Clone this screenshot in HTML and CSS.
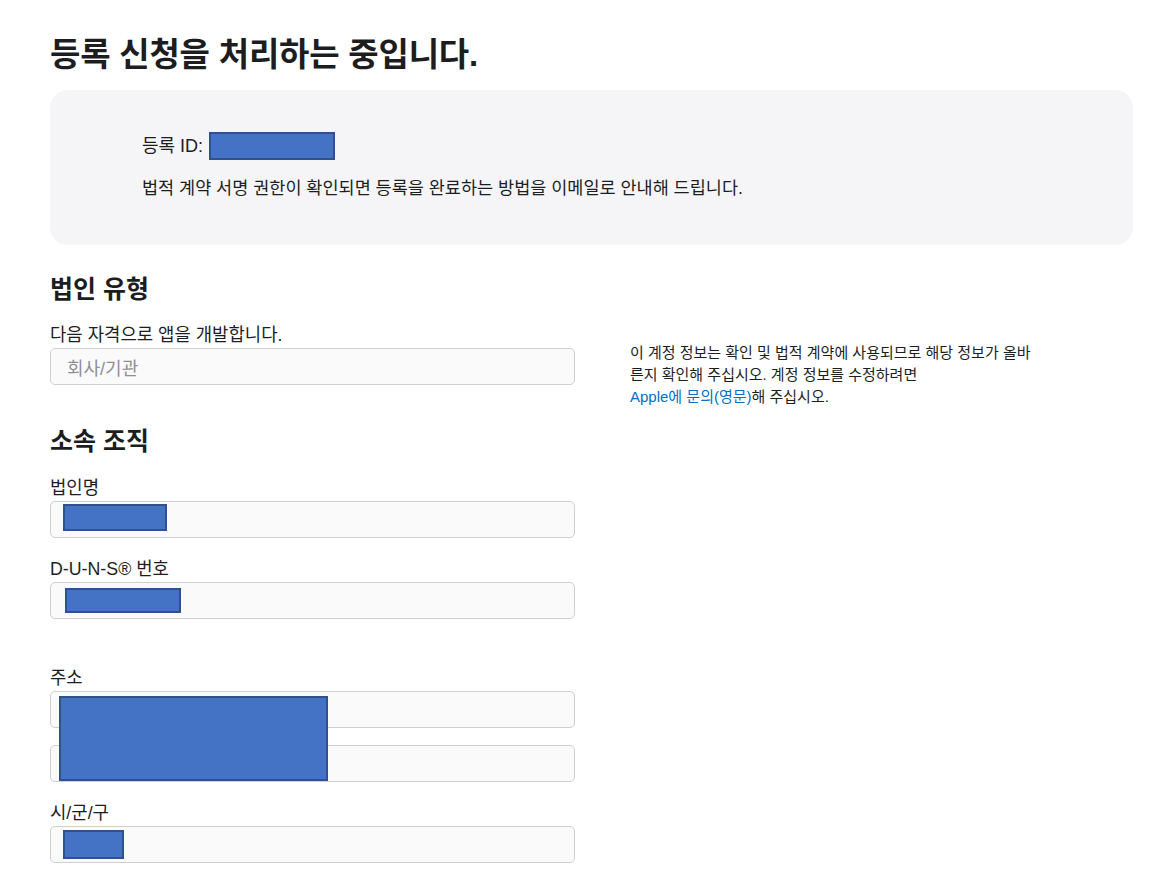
FILE: index.html
```html
<!DOCTYPE html>
<html lang="ko">
<head>
<meta charset="utf-8">
<title>등록 신청을 처리하는 중입니다.</title>
<link rel="stylesheet" href="styles.css">
</head>
<body>
<main class="page">
  <h1 class="title">등록 신청을 처리하는 중입니다.</h1>

  <section class="status">
    <p class="status-id">등록 ID: <span class="redact redact-id"></span></p>
    <p class="status-text">법적 계약 서명 권한이 확인되면 등록을 완료하는 방법을 이메일로 안내해 드립니다.</p>
  </section>

  <section class="section section-entity">
    <h2 class="section-title">법인 유형</h2>
    <div class="row">
      <div class="col-form">
        <div class="field">
          <label class="label">다음 자격으로 앱을 개발합니다.</label>
          <div class="input"><span class="placeholder">회사/기관</span></div>
        </div>
      </div>
      <aside class="note">이 계정 정보는 확인 및 법적 계약에 사용되므로 해당 정보가 올바른지 확인해 주십시오. 계정 정보를 수정하려면 <a class="link" href="#">Apple에 문의(영문)</a>해 주십시오.</aside>
    </div>
  </section>

  <section class="section section-org">
    <h2 class="section-title">소속 조직</h2>
    <div class="col-form">
      <div class="field">
        <label class="label">법인명</label>
        <div class="input"><span class="redact redact-name"></span></div>
      </div>
      <div class="field">
        <label class="label">D-U-N-S® 번호</label>
        <div class="input"><span class="redact redact-duns"></span></div>
      </div>
      <div class="field field-address">
        <label class="label">주소</label>
        <div class="input input-first"><span class="redact redact-address"></span></div>
        <div class="input input-second"></div>
      </div>
      <div class="field">
        <label class="label">시/군/구</label>
        <div class="input"><span class="redact redact-city"></span></div>
      </div>
    </div>
  </section>
</main>
</body>
</html>
```

FILE: styles.css
```css
* {
  box-sizing: border-box;
}

html, body {
  margin: 0;
  padding: 0;
  background: #ffffff;
}

body {
  font-family: "Liberation Sans", "Noto Sans CJK KR", sans-serif;
  color: #1d1d1f;
}

.page {
  width: 1083px;
  margin-left: 50px;
  padding-top: 33px;
}

.title {
  margin: 0;
  font-size: 33px;
  line-height: 44px;
  font-weight: 600;
  letter-spacing: -0.2px;
}

.status {
  margin-top: 13px;
  height: 155px;
  background: #f5f5f7;
  border-radius: 18px;
  padding: 42px 0 0 92px;
}

.status p {
  margin: 0;
}

.status-id {
  font-size: 18px;
  line-height: 28px;
  display: flex;
  align-items: center;
  gap: 6px;
}

.status-text {
  margin-top: 16px !important;
  font-size: 17.5px;
  line-height: 24px;
}

.redact {
  display: block;
  background: #4472c4;
  border: 2px solid #2f528f;
}

.redact-id {
  width: 126px;
  height: 28px;
}

.section {
  margin-top: 28px;
}

.section-org {
  margin-top: 40px;
}

.section-title {
  margin: 0 0 16px;
  font-size: 25px;
  line-height: 32px;
  font-weight: 600;
}

.row {
  display: flex;
  gap: 55px;
  align-items: flex-start;
}

.col-form {
  width: 525px;
  display: flex;
  flex-direction: column;
  gap: 17px;
}

.section-org .section-title {
  margin-bottom: 17px;
}

.field {
  display: flex;
  flex-direction: column;
}

.label {
  display: block;
  font-size: 17.8px;
  line-height: 24px;
  margin-top: 2px;
  margin-bottom: 1px;
}

.input {
  position: relative;
  height: 37px;
  border: 1px solid #cfcfd2;
  border-radius: 5px;
  background: #fafafa;
  padding: 0 16px;
  display: flex;
  align-items: center;
}

.input-second {
  margin-top: 17px;
}

.field-address {
  margin-top: 28px;
}

.placeholder {
  color: #8e8e93;
  font-size: 18px;
}

.redact-name,
.redact-duns,
.redact-address,
.redact-city {
  position: absolute;
}

.redact-name {
  left: 12px;
  top: 2px;
  width: 104px;
  height: 27px;
}

.redact-duns {
  left: 14px;
  top: 5px;
  width: 116px;
  height: 25px;
}

.redact-address {
  left: 8px;
  top: 4px;
  width: 269px;
  height: 85px;
  z-index: 2;
}

.redact-city {
  left: 12px;
  top: 3px;
  width: 61px;
  height: 29px;
}

.note {
  margin-top: 21px;
  margin-bottom: -40px;
  width: 408px;
  font-size: 15px;
  line-height: 22px;
  color: #1d1d1f;
}

.link {
  color: #0070c9;
  text-decoration: none;
  white-space: nowrap;
}
```
